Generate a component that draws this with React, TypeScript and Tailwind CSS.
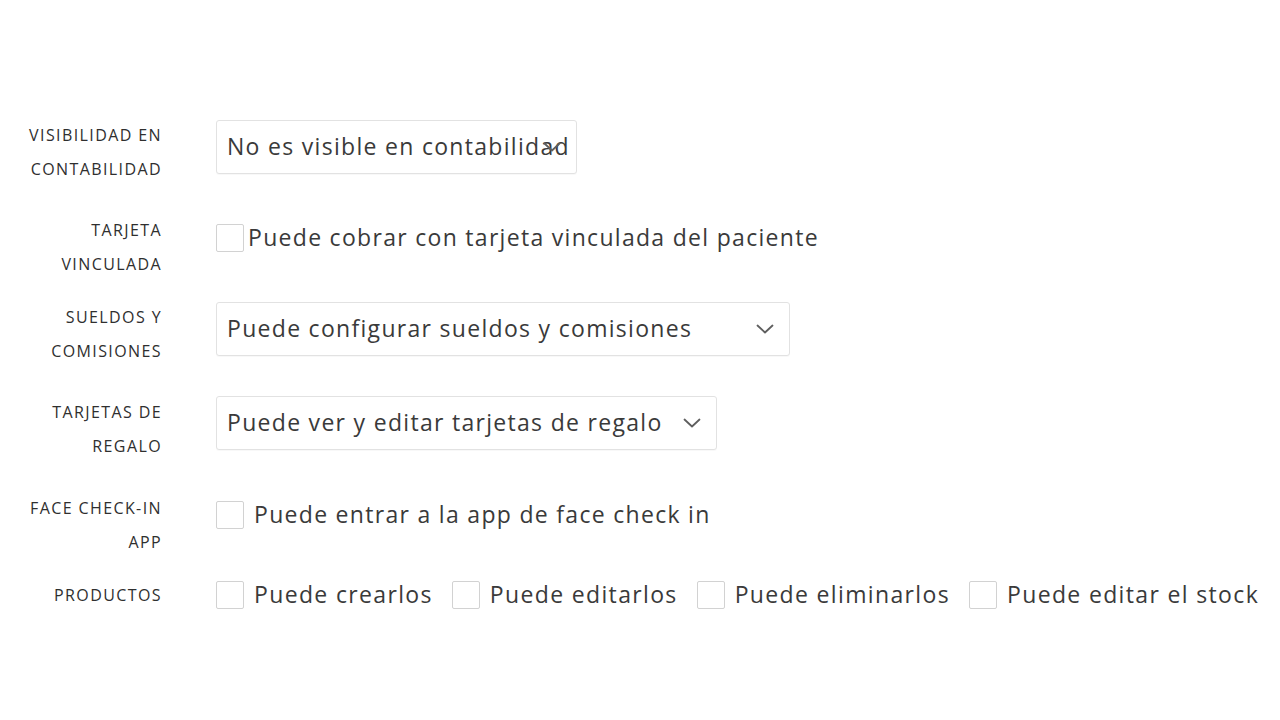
import { ReactNode } from "react";

const Chevron = () => (
  <svg
    width="18"
    height="10"
    viewBox="0 0 18 10"
    fill="none"
    className="absolute right-[15px] top-1/2 -translate-y-1/2"
  >
    <polyline
      points="1.5,1.5 9,8.5 16.5,1.5"
      stroke="#5f5f5f"
      strokeWidth="1.8"
      strokeLinecap="round"
      strokeLinejoin="round"
    />
  </svg>
);

const Select = ({ value, width }: { value: string; width: string }) => (
  <div
    className={`relative h-[54px] ${width} border border-[#e2e2e2] rounded-[3px] bg-white flex items-center pl-[10px] pb-[2px] overflow-hidden shadow-[0_1px_1px_rgba(0,0,0,0.03)]`}
  >
    <span className="whitespace-nowrap">{value}</span>
    <Chevron />
  </div>
);

const Box = () => (
  <span className="block w-[28px] h-[28px] shrink-0 border border-[#d2d2d2] rounded-[2px] bg-white" />
);

const Row = ({
  label,
  children,
  className,
}: {
  label: ReactNode;
  children: ReactNode;
  className?: string;
}) => (
  <div className={`flex ${className ?? ""}`}>
    <div className="w-[162px] shrink-0 pt-[1px] text-right text-[16px] font-medium leading-[34px] tracking-[1.4px] uppercase text-[#2f2f2f]">
      {label}
    </div>
    <div className="ml-[54px]">{children}</div>
  </div>
);

export default function App() {
  return (
    <div
      className="min-h-[720px] bg-white text-[#3a3a3a] pt-[117px]"
      style={{ fontFamily: '"Open Sans", sans-serif' }}
    >
      <div className="text-[23px] tracking-[1.3px]">
        {/* Visibilidad en contabilidad */}
        <Row
          label={
            <>
              Visibilidad en
              <br />
              Contabilidad
            </>
          }
        >
          <div className="pt-[3px]">
            <Select value="No es visible en contabilidad" width="w-[361px]" />
          </div>
        </Row>

        {/* Tarjeta vinculada */}
        <Row
          className="mt-[26px]"
          label={
            <>
              Tarjeta
              <br />
              Vinculada
            </>
          }
        >
          <label className="flex items-center gap-[4px] pt-[8px]">
            <Box />
            <span className="pb-[1px]">Puede cobrar con tarjeta vinculada del paciente</span>
          </label>
        </Row>

        {/* Sueldos y comisiones */}
        <Row
          className="mt-[18px]"
          label={
            <>
              Sueldos y
              <br />
              Comisiones
            </>
          }
        >
          <div className="pt-[3px]">
            <Select value="Puede configurar sueldos y comisiones" width="w-[574px]" />
          </div>
        </Row>

        {/* Tarjetas de regalo */}
        <Row
          className="mt-[26px]"
          label={
            <>
              Tarjetas de
              <br />
              Regalo
            </>
          }
        >
          <div className="pt-[2px]">
            <Select value="Puede ver y editar tarjetas de regalo" width="w-[501px]" />
          </div>
        </Row>

        {/* Face check-in */}
        <Row
          className="mt-[27px]"
          label={
            <>
              Face check-in
              <br />
              App
            </>
          }
        >
          <label className="flex items-center gap-[10px] pt-[7px]">
            <Box />
            <span className="pb-[1px]">Puede entrar a la app de face check in</span>
          </label>
        </Row>

        {/* Productos */}
        <Row className="mt-[18px] items-center" label="Productos">
          <div className="flex items-center gap-[19px] tracking-[1.35px]">
            {[
              "Puede crearlos",
              "Puede editarlos",
              "Puede eliminarlos",
              "Puede editar el stock",
            ].map((t) => (
              <label key={t} className="flex items-center gap-[10px]">
                <Box />
                <span className="whitespace-nowrap">{t}</span>
              </label>
            ))}
          </div>
        </Row>
      </div>
    </div>
  );
}
